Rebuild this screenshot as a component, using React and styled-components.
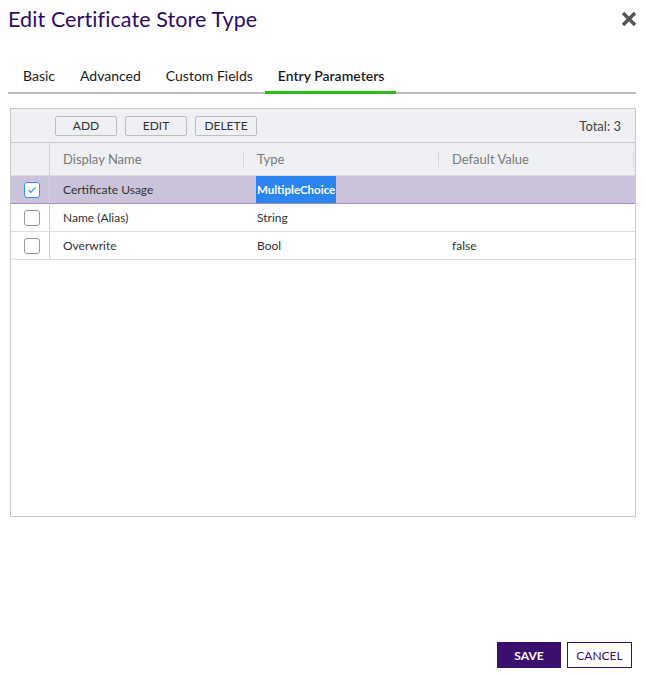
import React from 'react';
import styled, { createGlobalStyle } from 'styled-components';

const GlobalStyle = createGlobalStyle`
  html, body {
    margin: 0;
    padding: 0;
    background: #fff;
  }
  body {
    font-family: Lato, "Open Sans", "Liberation Sans", sans-serif;
    color: #333;
  }
`;

const Dialog = styled.div`
  width: 645px;
  height: 675px;
  display: flex;
  flex-direction: column;
  box-sizing: border-box;
`;

const TitleBar = styled.div`
  display: flex;
  align-items: center;
  justify-content: space-between;
  padding: 6px 8px 0 8px;
  height: 26px;
`;

const Title = styled.h1`
  margin: 0;
  font-size: 21.5px;
  font-weight: 400;
  color: #2d0b63;
  letter-spacing: 0.1px;
`;

const CloseButton = styled.button`
  border: 0;
  background: none;
  padding: 0;
  width: 16px;
  height: 16px;
  cursor: pointer;
  display: flex;
`;

const TabList = styled.div`
  display: flex;
  margin: 29px 9px 0 8px;
  padding-left: 2px;
  border-bottom: 2px solid #bcbcbc;
`;

const Tab = styled.div`
  padding: 0 12px 0 13px;
  height: 30px;
  line-height: 30px;
  font-size: 14px;
  color: #1a1a1a;
  margin-bottom: -2px;
  border-bottom: 3px solid ${(p) => (p.active ? '#2eb81a' : 'transparent')};
  font-weight: ${(p) => (p.active ? 600 : 400)};
`;

const Grid = styled.div`
  margin: 14px 9px 0 10px;
  height: 409px;
  border: 1px solid #c9c9c9;
  box-sizing: border-box;
  display: flex;
  flex-direction: column;
`;

const Toolbar = styled.div`
  height: 34px;
  box-sizing: border-box;
  background: #eff0f4;
  border-bottom: 1px solid #c9c9c9;
  display: flex;
  align-items: center;
  padding: 0 14px 0 44px;
  gap: 8px;
`;

const ToolButton = styled.button`
  width: 62px;
  height: 20px;
  border: 1px solid #bdbdbd;
  border-radius: 2px;
  background: #eff0f4;
  font-family: inherit;
  font-size: 12px;
  color: #333;
  padding: 0;
`;

const Total = styled.div`
  margin-left: auto;
  font-size: 13px;
  color: #444;
`;

const Row = styled.div`
  display: grid;
  grid-template-columns: 39px 194px 195px 195px 1fr;
  height: ${(p) => (p.header ? 33 : 28)}px;
  box-sizing: border-box;
  border-bottom: 1px solid ${(p) => (p.selected ? '#a68bc7' : '#dcdcdc')};
  background: ${(p) => (p.header ? '#eff0f4' : p.selected ? '#cbc2db' : '#fff')};
`;

const CheckCell = styled.div`
  display: flex;
  align-items: center;
  justify-content: center;
  border-right: 1px solid #d3d3d3;
`;

const HeadCell = styled.div`
  display: flex;
  align-items: center;
  padding-left: 13px;
  font-size: 13px;
  color: #7a7a7a;
  position: relative;
  &::after {
    content: '';
    display: ${(p) => (p.sep ? 'block' : 'none')};
    position: absolute;
    right: 0;
    top: 8px;
    bottom: 8px;
    width: 1px;
    background: #d6d6d6;
  }
`;

const Cell = styled.div`
  display: flex;
  align-items: center;
  padding-left: 13px;
  font-size: 12px;
  color: #333;
`;

const Highlight = styled.span`
  background: #2a84f2;
  color: #fff;
  font-weight: 700;
  font-size: 11.5px;
  align-self: stretch;
  display: flex;
  align-items: center;
  padding: 0 1px;
  margin-left: -1px;
`;

const Box = styled.span`
  width: 14px;
  height: 14px;
  border: 1px solid ${(p) => (p.checked ? '#3a8ef0' : '#a49593')};
  border-radius: 3px;
  background: #fff;
  display: flex;
  align-items: center;
  justify-content: center;
  margin-left: 3px;
`;

const Empty = styled.div`
  flex: 1;
  background: #fff;
`;

const Footer = styled.div`
  margin-top: auto;
  display: flex;
  justify-content: flex-end;
  gap: 6px;
  padding: 0 13px 7px 0;
`;

const FooterButton = styled.button`
  width: ${(p) => (p.primary ? 64 : 65)}px;
  height: 26px;
  border: 1px solid #3b0f6f;
  background: ${(p) => (p.primary ? '#3b0f6f' : '#fff')};
  color: ${(p) => (p.primary ? '#fff' : '#3b0f6f')};
  font-family: inherit;
  font-size: 12px;
  font-weight: ${(p) => (p.primary ? 700 : 400)};
  padding: 0;
`;

const rows = [
  { name: 'Certificate Usage', type: 'MultipleChoice', value: '', checked: true },
  { name: 'Name (Alias)', type: 'String', value: '' },
  { name: 'Overwrite', type: 'Bool', value: 'false' },
];

const CheckBox = ({ checked }) => (
  <Box checked={checked}>
    {checked && (
      <svg width="10" height="8" viewBox="0 0 10 8">
        <path d="M1.5 4.2 L3.8 6.3 L8.6 1.4" fill="none" stroke="#3a8ef0" strokeWidth="1.2" />
      </svg>
    )}
  </Box>
);

const App = () => (
  <Dialog>
    <GlobalStyle />
    <TitleBar>
      <Title>Edit Certificate Store Type</Title>
      <CloseButton aria-label="close">
        <svg width="16" height="16" viewBox="0 0 16 16">
          <path d="M2 2 L14 14 M14 2 L2 14" stroke="#555" strokeWidth="3.4" strokeLinecap="butt" />
        </svg>
      </CloseButton>
    </TitleBar>
    <TabList>
      <Tab>Basic</Tab>
      <Tab>Advanced</Tab>
      <Tab>Custom Fields</Tab>
      <Tab active>Entry Parameters</Tab>
    </TabList>
    <Grid>
      <Toolbar>
        <ToolButton>ADD</ToolButton>
        <ToolButton>EDIT</ToolButton>
        <ToolButton>DELETE</ToolButton>
        <Total>Total: 3</Total>
      </Toolbar>
      <Row header>
        <CheckCell />
        <HeadCell sep>Display Name</HeadCell>
        <HeadCell sep>Type</HeadCell>
        <HeadCell sep>Default Value</HeadCell>
        <HeadCell />
      </Row>
      {rows.map((r) => (
        <Row key={r.name} selected={r.checked}>
          <CheckCell>
            <CheckBox checked={r.checked} />
          </CheckCell>
          <Cell>{r.name}</Cell>
          <Cell>{r.checked ? <Highlight>{r.type}</Highlight> : r.type}</Cell>
          <Cell>{r.value}</Cell>
          <Cell />
        </Row>
      ))}
      <Empty />
    </Grid>
    <Footer>
      <FooterButton primary>SAVE</FooterButton>
      <FooterButton>CANCEL</FooterButton>
    </Footer>
  </Dialog>
);

export default App;
